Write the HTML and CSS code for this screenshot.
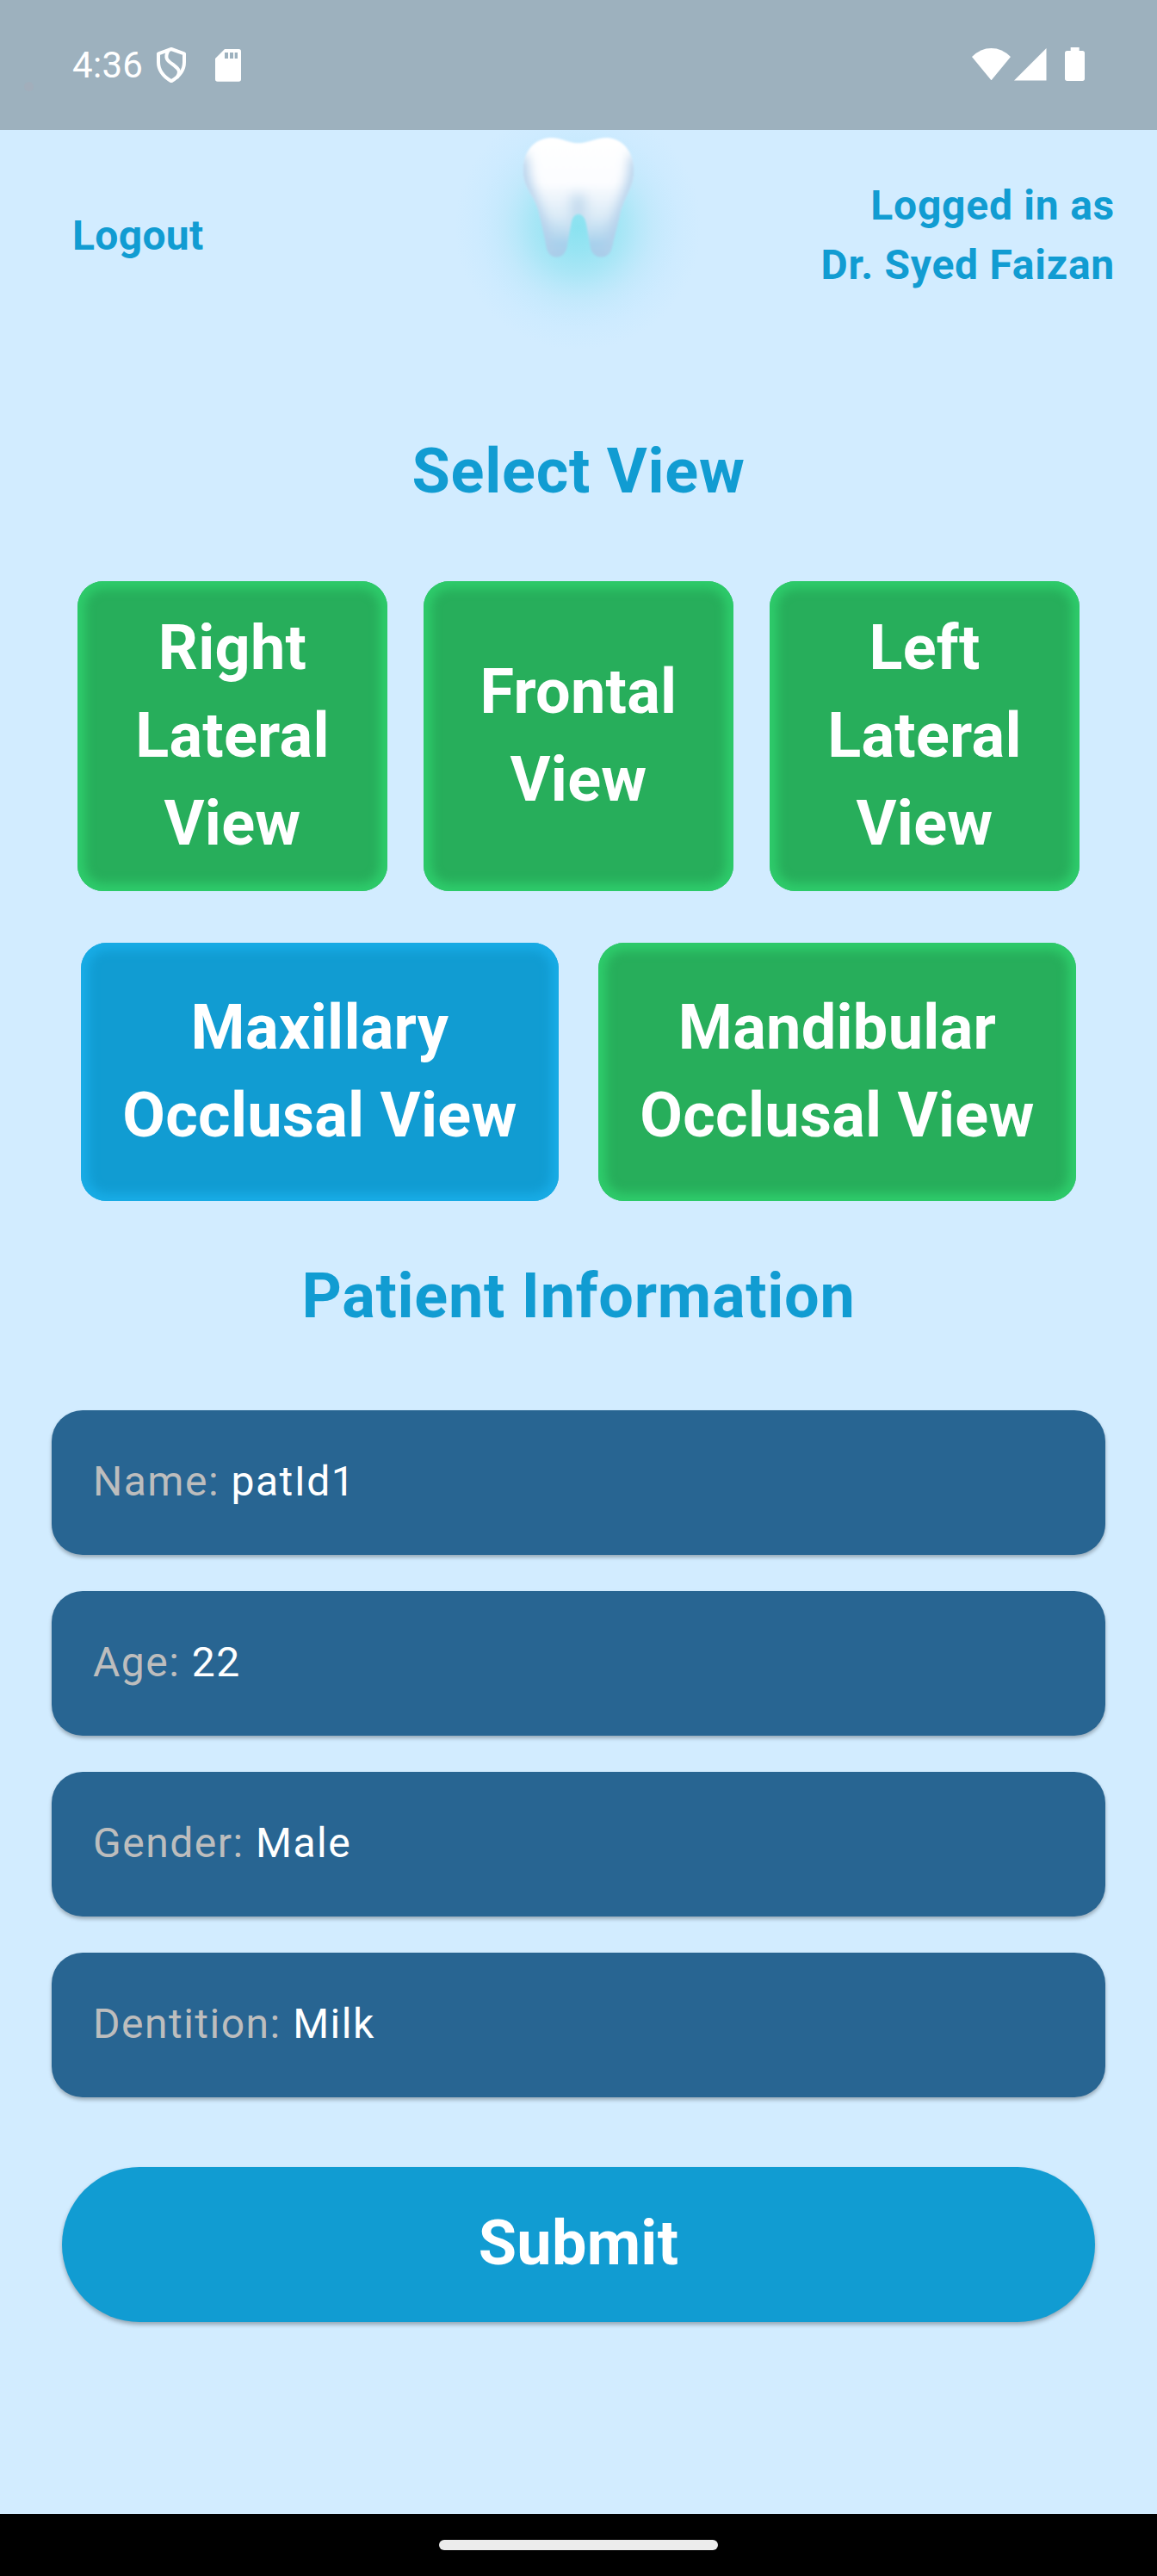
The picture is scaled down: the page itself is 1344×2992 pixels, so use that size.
FILE: index.html
```html
<!DOCTYPE html>
<html lang="en">
<head>
<meta charset="utf-8">
<title>Select View</title>
<link rel="stylesheet" href="styles.css">
</head>
<body>
<div class="status-bar">
  <div class="status-left">
    <span class="clock">4:36</span>
    <svg class="ic-shield" viewBox="0 0 102 124" width="34" height="41.300"><path d="M51 6 96 22V52Q96 92 51 118Q6 92 6 52V22Z" fill="none" stroke="#fff" stroke-width="12" stroke-linejoin="round"/><path d="M40 12C22 44 48 52 62 64C78 76 84 86 70 106" fill="none" stroke="#fff" stroke-width="12"/></svg>
    <svg class="ic-sd" viewBox="0 0 90 113" width="30" height="37.700"><path d="M33 0H82Q90 0 90 8V105Q90 113 82 113H8Q0 113 0 105V33Z" fill="#fff"/><path d="M33 12h12v21H33zM51 12h12v21H51zM68 12h10v21H68z" fill="#9db1be"/></svg>
  </div>
  <div class="status-right">
    <svg class="ic-wifi" viewBox="0 0 135 112" width="45" height="37.300"><path d="M0 30Q30 0 67.500 0T135 30L67.500 112Z" fill="#fff"/></svg>
    <svg class="ic-signal" viewBox="0 0 112 112" width="37.500" height="37.500"><path d="M112 0V112H0Z" fill="#fff"/></svg>
    <svg class="ic-battery" viewBox="0 0 69 117" width="23" height="39"><path d="M20 0H50V12H61Q69 12 69 20V109Q69 117 61 117H8Q0 117 0 109V20Q0 12 8 12H20Z" fill="#fff"/></svg>
  </div>
  <span class="camera-dot"></span>
</div>
<main class="screen">
  <header class="top">
    <a class="logout">Logout</a>
    <svg class="tooth" viewBox="0 63 900 837" width="300" height="279">
      <defs>
        <radialGradient id="glow" gradientUnits="userSpaceOnUse" cx="455" cy="400" r="430">
          <stop offset="0" stop-color="#8ae2f0"/>
          <stop offset=".2" stop-color="#98e4f3"/>
          <stop offset=".37" stop-color="#a9e6f6"/>
          <stop offset=".5" stop-color="#b9e8fa"/>
          <stop offset=".6" stop-color="#c3e9fc"/>
          <stop offset=".7" stop-color="#c9eafe"/>
          <stop offset=".82" stop-color="#ceebff"/>
          <stop offset="1" stop-color="#d2ecff"/>
        </radialGradient>
        <linearGradient id="body" x1="0" y1="0" x2="0" y2="1">
          <stop offset="0" stop-color="#fff"/>
          <stop offset=".38" stop-color="#fcfdff"/>
          <stop offset=".64" stop-color="#dcebf7"/>
          <stop offset=".86" stop-color="#a8d1ec"/>
          <stop offset="1" stop-color="#aacbe8"/>
        </linearGradient>
        <filter id="soft" x="-40%" y="-20%" width="180%" height="140%"><feGaussianBlur stdDeviation="20"/></filter>
        <filter id="mid" filterUnits="userSpaceOnUse" x="350" y="180" width="210" height="300"><feGaussianBlur stdDeviation="20"/></filter>
        <filter id="edge"><feGaussianBlur stdDeviation="3"/></filter>
        <clipPath id="shape"><path d="M360 90C400 90 420 109 455 109C490 109 515 90 555 90C610 92 649 140 649 205C649 265 612 300 600 360C590 402 580 440 573 470C565 518 505 518 497 470L483 390C476 344 435 344 430 390L416 470C407 518 352 518 344 470C338 435 327 390 315 340C300 290 263 262 263 205C263 140 300 92 360 90Z"/></clipPath>
      </defs>
      <rect x="0" y="63" width="900" height="837" fill="url(#glow)"/>
      <g filter="url(#edge)"><g clip-path="url(#shape)">
        <rect x="250" y="80" width="410" height="440" fill="url(#body)"/>
        <path d="M250 150C252 290 315 330 340 500M662 150C660 290 600 330 575 500" fill="none" stroke="#b2d0eb" stroke-width="56" filter="url(#soft)"/>
        <path d="M455 290V400" fill="none" stroke="#c2daee" stroke-width="50" filter="url(#mid)"/>
      </g></g>
    </svg>
    <div class="user">Logged in as<br>Dr. Syed Faizan</div>
  </header>
  <h1 class="heading">Select View</h1>
  <section class="views">
    <div class="row row-three">
      <button class="view">Right<br>Lateral<br>View</button>
      <button class="view">Frontal<br>View</button>
      <button class="view">Left<br>Lateral<br>View</button>
    </div>
    <div class="row row-two">
      <button class="view view-selected">Maxillary<br>Occlusal View</button>
      <button class="view">Mandibular<br>Occlusal View</button>
    </div>
  </section>
  <h2 class="heading heading-info">Patient Information</h2>
  <section class="fields">
    <div class="field"><span class="label">Name: </span>patId1</div>
    <div class="field"><span class="label">Age: </span>22</div>
    <div class="field"><span class="label">Gender: </span>Male</div>
    <div class="field"><span class="label">Dentition: </span>Milk</div>
  </section>
  <button class="submit">Submit</button>
</main>
<div class="nav-bar"><span class="handle"></span></div>
</body>
</html>
```
FILE: styles.css
```css
* { box-sizing: border-box; }
body {
  margin: 0;
  width: 1344px;
  height: 2992px;
  display: flex;
  flex-direction: column;
  background: #d2ecff;
  font-family: Roboto, "Liberation Sans", sans-serif;
  overflow: hidden;
}
button { border: 0; padding: 0; font-family: inherit; letter-spacing: 0.3px; }
.status-bar {
  position: relative;
  height: 151px;
  flex: none;
  background: #9db1be;
  display: flex;
  justify-content: space-between;
  padding: 0 84px;
  color: #fff;
}
.status-left, .status-right { display: flex; align-items: flex-start; }
.clock { font-size: 42px; line-height: 50px; margin-top: 50.5px; width: 82px; letter-spacing: 0.3px; }
.ic-shield { margin: 55px 0 0 16px; }
.ic-sd { margin: 57px 0 0 34px; }
.ic-wifi { margin-top: 56px; }
.ic-signal { margin: 56px 0 0 4px; }
.ic-battery { margin: 55px 0 0 21.5px; }
.camera-dot {
  position: absolute;
  left: 28px;
  top: 95px;
  width: 11px;
  height: 11px;
  border-radius: 50%;
  background: #a2aebb;
}
.screen { flex: 1; display: flex; flex-direction: column; }
.top {
  height: 346px;
  flex: none;
  display: grid;
  grid-template-columns: 436px 300px 1fr;
  padding: 0 48px 0 84px;
  align-items: start;
  color: #119cd2;
  font-size: 48px;
  font-weight: 700;
  line-height: 69px;
}
.logout { margin-top: 88px; letter-spacing: 0.3px; }
.user { margin-top: 53px; margin-right: 1px; text-align: right; letter-spacing: 0.75px; }
.heading {
  margin: 0;
  color: #119cd2;
  font-size: 72px;
  font-weight: 700;
  line-height: 102px;
  text-align: center;
  letter-spacing: 0.75px;
}
.views { display: flex; flex-direction: column; gap: 60px; margin-top: 76px; }
.row { display: flex; justify-content: center; }
.row-three { gap: 42px; }
.row-two { gap: 46px; }
.view {
  width: 360px;
  height: 360px;
  border-radius: 30px;
  background: #27ae5b;
  box-shadow: inset 0 0 12px 9px #2ecc6b;
  color: #fff;
  font-size: 72px;
  font-weight: 700;
  line-height: 102px;
}
.row-two .view { width: 555px; height: 300px; }
.row-two .view-selected { background: #119cd2; box-shadow: inset 0 0 12px 9px #18ace6; }
.heading-info { margin-top: 60px; }
.fields { display: flex; flex-direction: column; gap: 42px; padding: 0 60px; margin-top: 81px; }
.field {
  height: 168px;
  border-radius: 36px;
  padding: 48px;
  background: #286592;
  box-shadow: 0 3px 4px rgba(0, 0, 0, .28);
  color: #fff;
  font-size: 48px;
  line-height: 69px;
  letter-spacing: 1.5px;
}
.label { color: #bdbdbd; }
.submit {
  width: 1200px;
  height: 180px;
  flex: none;
  margin: 81px auto 0;
  border-radius: 90px;
  background: #119cd2;
  box-shadow: 0 3px 5px rgba(0, 0, 0, .3);
  color: #fff;
  font-size: 72px;
  font-weight: 700;
  line-height: 102px;
  padding-bottom: 2px;
}
.nav-bar {
  height: 72px;
  flex: none;
  background: #000;
  display: flex;
  justify-content: center;
  padding-top: 30px;
}
.handle { width: 324px; height: 12px; border-radius: 6px; background: #ececec; }
```
